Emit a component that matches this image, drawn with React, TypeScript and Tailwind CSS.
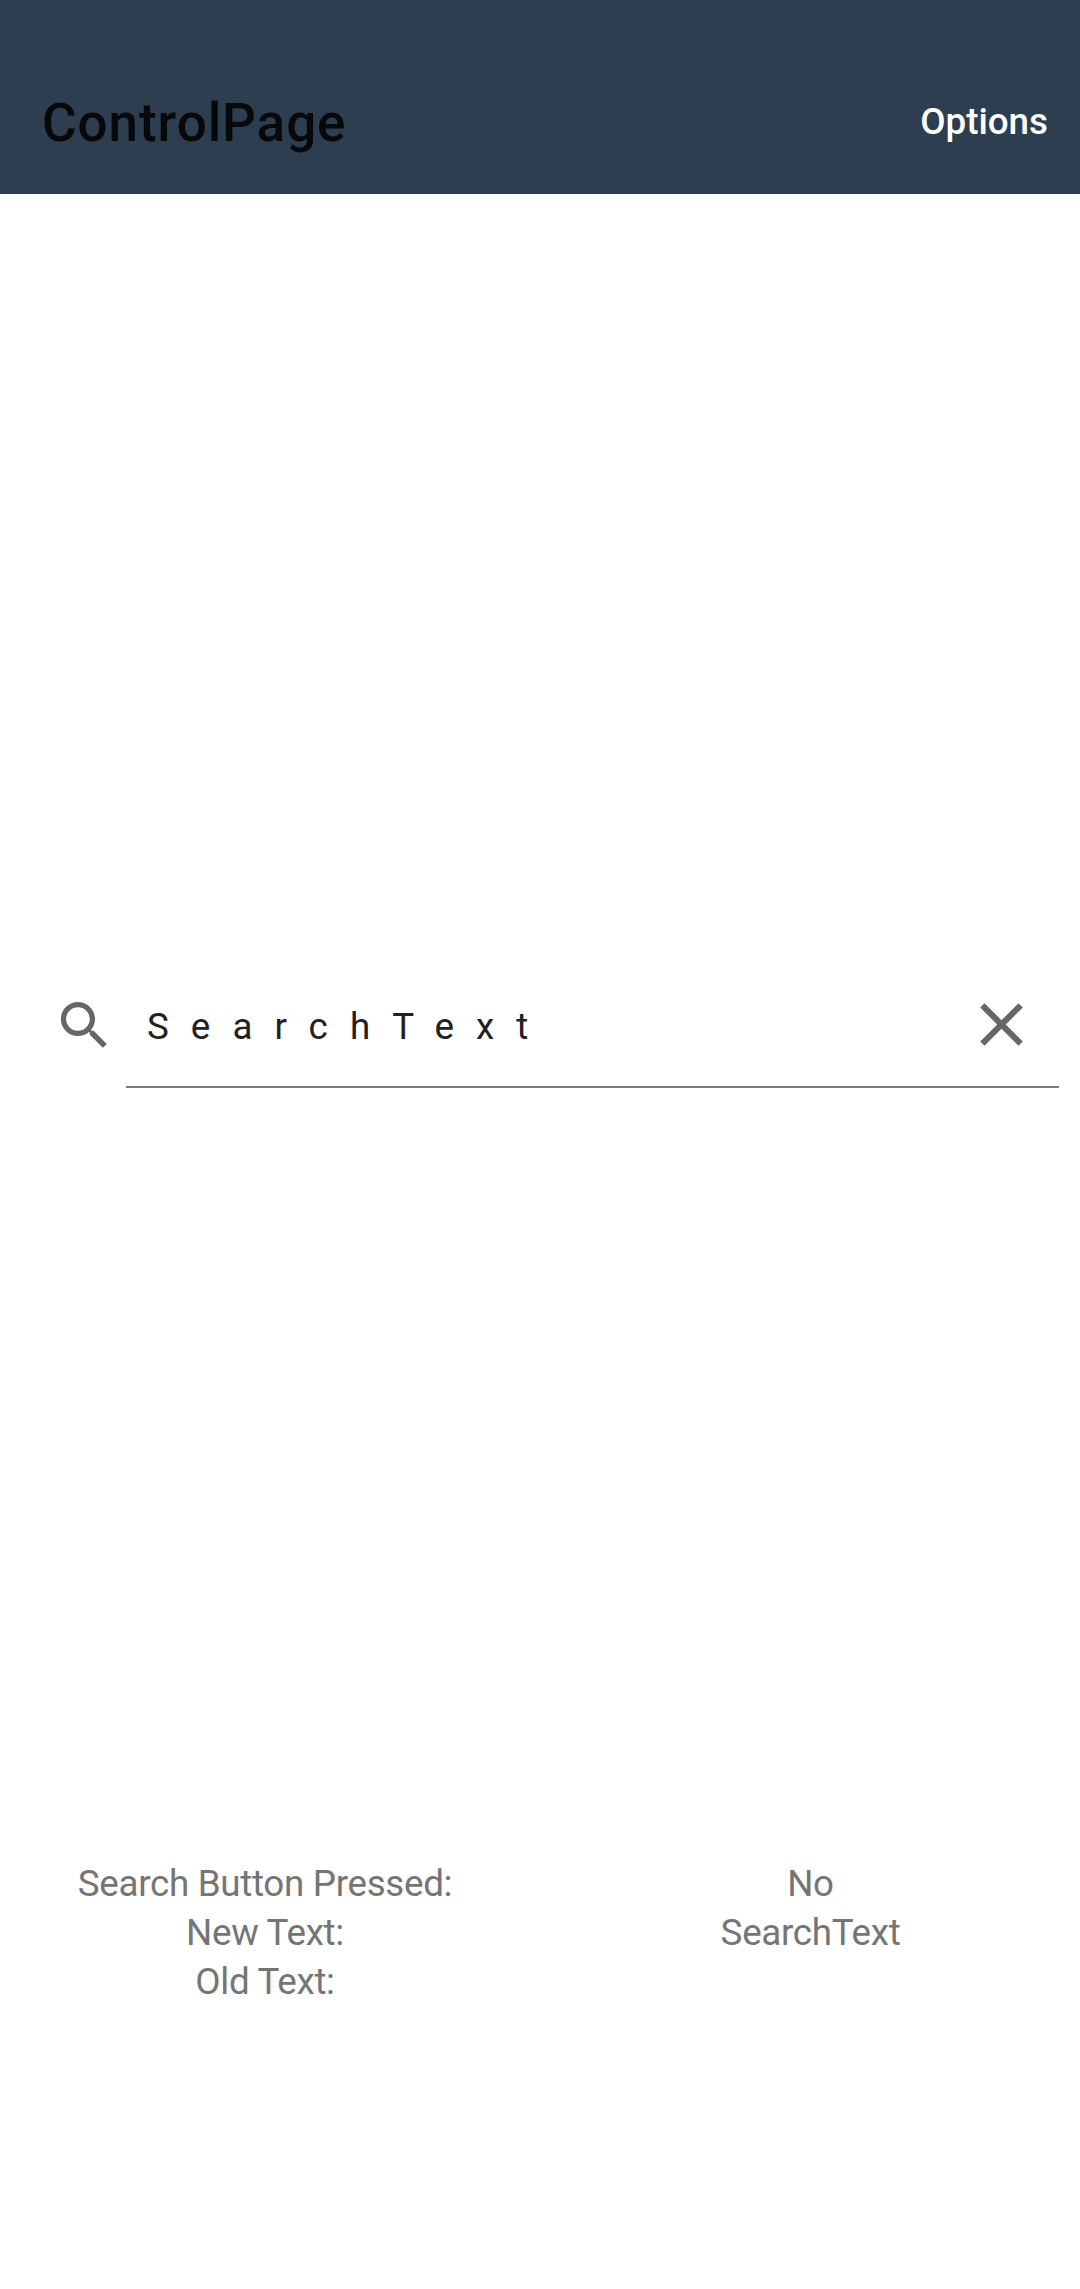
export default function App() {
  return (
    <div className="flex h-[2289px] w-[1080px] flex-col bg-white font-['Roboto',sans-serif]">
      <header className="flex h-[194px] items-end justify-between bg-[#2c3e50] pl-[42px] pr-[32px]">
        <h1 className="mb-[38px] text-[53px] leading-[66px] font-medium tracking-[0.95px] text-[#06080a]">ControlPage</h1>
        <button className="mb-[48px] text-[36.75px] leading-[48px] font-medium text-white">Options</button>
      </header>
      <div className="mt-[774px] flex h-[120px] items-start pl-[42px] pr-[21px]">
        <div className="flex w-[84px] justify-center pt-[26px]">
          <svg className="size-[63px]" viewBox="0 0 24 24" fill="#666666">
            <path d="M15.5 14h-.79l-.28-.27C15.41 12.59 16 11.11 16 9.5 16 5.91 13.09 3 9.5 3S3 5.91 3 9.5 5.91 16 9.5 16c1.61 0 3.09-.59 4.23-1.57l.27.28v.79l5 4.99L20.49 19l-4.99-5zm-6 0C7.01 14 5 11.99 5 9.5S7.01 5 9.5 5 14 7.01 14 9.5 11.99 14 9.5 14z" />
          </svg>
        </div>
        <div className="flex h-[120px] flex-1 items-start justify-between border-b-2 border-[#7a7a7a] pl-[21px]">
          <span className="mt-[35px] text-[36.75px] leading-[48px] tracking-[22.05px] text-[#212121]">SearchText</span>
          <svg className="mt-[20px] mr-[21px] size-[73px]" viewBox="0 0 24 24" fill="#666666">
            <path d="M19 6.41L17.59 5 12 10.59 6.41 5 5 6.41 10.59 12 5 17.59 6.41 19 12 13.41 17.59 19 19 17.59 13.41 12z" />
          </svg>
        </div>
      </div>
      <div className="mt-[771px] grid grid-cols-[530px_539px] justify-between text-center text-[36.75px] leading-[49px] tracking-[-0.3px] text-[#757575]">
        <div><p>Search Button Pressed:</p><p>New Text:</p><p>Old Text:</p></div>
        <div><p>No</p><p>SearchText</p></div>
      </div>
    </div>
  );
}
